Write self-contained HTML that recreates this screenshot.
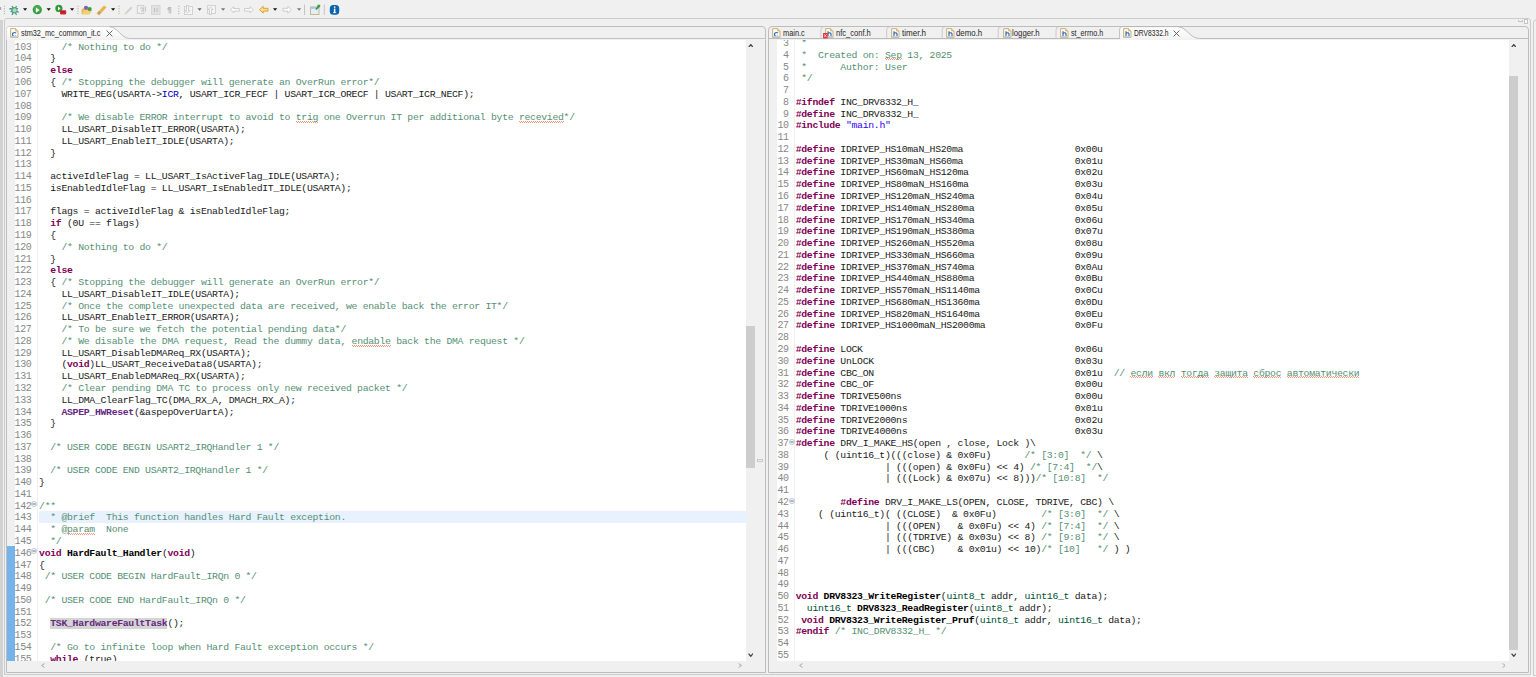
<!DOCTYPE html><html><head><meta charset="utf-8"><style>
*{margin:0;padding:0;box-sizing:border-box}
html,body{width:1536px;height:677px;overflow:hidden;background:#f0f0f0;position:relative;font-family:"Liberation Sans",sans-serif}
.abs{position:absolute}
.clip{position:absolute;overflow:hidden}
.ln{position:absolute;height:11.77px;line-height:11.77px;text-align:right;font-family:"Liberation Mono",monospace;font-size:10px;letter-spacing:-0.42px;color:#878787;white-space:pre}
.cl{position:absolute;height:11.77px;line-height:11.77px;font-family:"Liberation Mono",monospace;font-size:9.8px;letter-spacing:-0.3px;color:#202020;white-space:pre}
.curl{position:absolute;height:11.77px;background:#e8f2fe}
.k{color:#7F0055;font-weight:bold}
.c{color:#558f74}
.s{color:#2A00FF}
.f{color:#0000C0}
.d{font-weight:bold;color:#000}
.p{font-weight:bold;color:#642880}
.hl{font-weight:bold;color:#642880;background:#d4d4d4}
.t{color:#005032}
.u{background-image:linear-gradient(90deg,#f59a82 50%,transparent 50%),linear-gradient(90deg,transparent 50%,#f59a82 50%);background-size:2px 1px,2px 1px;background-position:0 8.6px,0 9.6px;background-repeat:repeat-x}
.fold{position:absolute}
.tab{position:absolute;font-size:8.6px;color:#1e1e1e;white-space:pre;line-height:10px;transform-origin:0 0}
</style></head><body>
<svg class="abs" style="left:0;top:0" width="345" height="18" viewBox="0 0 345 18"><rect x="0" y="7" width="1.2" height="3" fill="#a8a8a8"/><rect x="3.9" y="5.8" width="1" height="1" fill="#b0a595"/><rect x="3.9" y="8.2" width="1" height="1" fill="#b0a595"/><rect x="3.9" y="10.8" width="1" height="1" fill="#b0a595"/><rect x="3.9" y="13.1" width="1" height="1" fill="#b0a595"/><g stroke="#3a8f8a" stroke-width="1.1" fill="none"><path d="M10 8.5h8M10.5 11.5h7M12 6l1 2M16.5 6l-1 2M12 15l1-2M16.5 15l-1-2M9.5 8.5l1 1M18.5 12.5l-1-1"/></g><circle cx="14.3" cy="10.3" r="3.2" fill="#4aa3a0"/><circle cx="14.6" cy="10.3" r="2" fill="#b8dc98"/><path d="M23.0 8.2h4.2l-2.1 2.6z" fill="#111"/><circle cx="37.3" cy="9.7" r="4.6" fill="#2f9a3c"/><circle cx="37.3" cy="9.2" r="3.4" fill="#5cb85c" opacity="0.6"/><path d="M35.9 7.4v5.4l3.5-2.7z" fill="#fff"/><path d="M46.6 8.2h4.2l-2.1 2.6z" fill="#111"/><circle cx="58.9" cy="8.4" r="3.6" fill="#2f9a3c"/><path d="M58 6.6v3.8l2.5-1.9z" fill="#fff"/><rect x="60" y="10.2" width="6.2" height="4.2" rx="0.8" fill="#d9262b"/><rect x="61" y="11.5" width="4.2" height="0.8" fill="#8a1418"/><path d="M70.0 8.2h4.2l-2.1 2.6z" fill="#111"/><rect x="77.5" y="5.8" width="1" height="1" fill="#b0a595"/><rect x="77.5" y="8.2" width="1" height="1" fill="#b0a595"/><rect x="77.5" y="10.8" width="1" height="1" fill="#b0a595"/><rect x="77.5" y="13.1" width="1" height="1" fill="#b0a595"/><path d="M81.6 9.5l2-1.6 1 1h4.5l2.9 1.2-2.5 4.2h-7.9z" fill="#e8b84a"/><path d="M82 14.2l2.2-4.4h7.6l-2.4 4.4z" fill="#f3cf6f"/><circle cx="86" cy="7.8" r="2.1" fill="#7b5fbf"/><circle cx="89.6" cy="9" r="2.1" fill="#3d9a45"/><path d="M96.5 13.5l7.5-8 2.6 1.8-7.5 8.1z" fill="#e9b44c"/><path d="M99 11l2 1.6-1.7 1.8-2-1.6z" fill="#a9a49a"/><path d="M96.3 13.8l1.7 1.4 -1.5 0.3z" fill="#fff2a8"/><path d="M111.0 8.2h4.2l-2.1 2.6z" fill="#111"/><rect x="118.5" y="5.8" width="1" height="1" fill="#b0a595"/><rect x="118.5" y="8.2" width="1" height="1" fill="#b0a595"/><rect x="118.5" y="10.8" width="1" height="1" fill="#b0a595"/><rect x="118.5" y="13.1" width="1" height="1" fill="#b0a595"/><path d="M124 14l7-7.5 1.5 1.5-6.5 6.5z" fill="#d0d0cc"/><path d="M124.5 14.3l3-2 1 1z" fill="#e8e6c0"/><rect x="137.3" y="5.5" width="6.5" height="8" fill="none" stroke="#cfcfcf" stroke-width="1"/><path d="M140 8h3v3h-2" stroke="#c0c0c0" fill="none"/><path d="M145.5 6.5v5" stroke="#c8c8c8"/><rect x="151.5" y="5.5" width="8.5" height="9" fill="#e2e2e2" stroke="#d6d6d6"/><path d="M154.5 8v4M157 8v4" stroke="#bdbdbd"/><path d="M168 7.5h3.2M169.2 7.5v6M170.7 7.5v6" stroke="#bcbcbc" stroke-width="1"/><circle cx="168.5" cy="9" r="1.2" fill="#bcbcbc"/><rect x="178.3" y="5.8" width="1" height="1" fill="#b0a595"/><rect x="178.3" y="8.2" width="1" height="1" fill="#b0a595"/><rect x="178.3" y="10.8" width="1" height="1" fill="#b0a595"/><rect x="178.3" y="13.1" width="1" height="1" fill="#b0a595"/><rect x="184.5" y="6.5" width="8" height="8" fill="#f4f4f4" stroke="#d2d2d2"/><path d="M186.5 5.5v5l-1.5 0l2.5 2.5 2.5-2.5h-1.5v-5z" fill="#f8f8f8" stroke="#c4c4c4" stroke-width="0.8"/><path d="M197.5 8.2h4.2l-2.1 2.6z" fill="#666"/><rect x="207.5" y="5.5" width="8" height="8" fill="#f4f4f4" stroke="#d2d2d2"/><path d="M209.5 14.5v-5h-1.5l2.5-2.5 2.5 2.5h-1.5v5z" fill="#f8f8f8" stroke="#c4c4c4" stroke-width="0.8"/><path d="M221.0 8.2h4.2l-2.1 2.6z" fill="#777"/><path d="M230.5 9.7l3.3-3v1.8h5.5v2.6h-5.5v1.8z" fill="#fafafa" stroke="#c8c8c8" stroke-width="0.9"/><path d="M253.3 9.7l-3.3-3v1.8h-5.5v2.6h5.5v1.8z" fill="#fafafa" stroke="#c8c8c8" stroke-width="0.9"/><path d="M259.5 9.7l3.7-3.4v2h4.8v2.8h-4.8v2z" fill="#fce08a" stroke="#d9a13a" stroke-width="1"/><path d="M273.0 8.2h4.2l-2.1 2.6z" fill="#111"/><path d="M291.5 9.7l-3.7-3.4v2h-4.8v2.8h4.8v2z" fill="#fbfbfb" stroke="#c8c8c8" stroke-width="0.9"/><path d="M297.0 8.2h4.2l-2.1 2.6z" fill="#777"/><rect x="304" y="4.5" width="1" height="10.5" fill="#c4c4c4"/><rect x="310.5" y="7" width="8.5" height="7.5" fill="#dff0fb" stroke="#c9b07a" stroke-width="0.9"/><rect x="310.5" y="7" width="8.5" height="1.8" fill="#9cc8ea"/><path d="M316 9.5l2.5-3" stroke="#2e8b3a" stroke-width="1.3"/><circle cx="318.8" cy="6" r="1.6" fill="#3aa24a"/><rect x="323.8" y="4.5" width="1" height="10.5" fill="#c4c4c4"/><rect x="329.8" y="5" width="9.4" height="9.8" rx="3.5" fill="#0b63ad"/><rect x="333.9" y="8.6" width="1.5" height="4.3" fill="#fff"/><rect x="333.9" y="6.4" width="1.5" height="1.4" fill="#fff"/><rect x="333" y="12.3" width="3.2" height="0.8" fill="#fff"/></svg>
<div class="abs" style="left:0;top:20px;width:2.6px;height:657px;background:#d2d2d2"></div>
<div class="abs" style="left:3.5px;top:17.8px;width:1527px;height:657.1px;border:1px solid #cccccc;border-radius:3px 3px 0 0"></div>
<div class="abs" style="left:1518px;top:19.6px;width:4.5px;height:2px;border:1px solid #c4c4c4;border-top:none"></div>
<div class="abs" style="left:1524.2px;top:19.2px;width:4px;height:5px;border:1px solid #c4c4c4;border-top-width:1.5px;background:#fafafa"></div>
<div class="abs" style="left:1533.3px;top:18.8px;width:10px;height:657px;border:1px solid #cccccc;border-radius:4px 0 0 0"></div>
<div class="abs" style="left:6.0px;top:25.8px;width:759.7px;height:647.1px;border:1px solid #bdbdbd;border-radius:4px 4px 0 0;background:#f0f0f0"></div>
<svg class="abs" style="left:0;top:0" width="770" height="40" viewBox="0 0 770 40"><defs><linearGradient id="ag" x1="0" y1="0" x2="0" y2="1"><stop offset="0" stop-color="#ffffff"/><stop offset="1" stop-color="#f3f3f3"/></linearGradient></defs><path d="M6.5 38.6V30.3Q6.5 26.8 10 26.8H109.5C117.5 26.8 121.5 38.5 129.5 38.5H765V39.7H6.5z" fill="url(#ag)"/><path d="M109.5 26.8C117.5 26.8 121.5 38.5 129.5 38.5H765" fill="none" stroke="#b4b4b4" stroke-width="0.9"/><rect x="6.5" y="38.9" width="759" height="0.9" fill="#f0f0f0"/></svg>
<div class="abs" style="left:768.3px;top:25.8px;width:760.4px;height:647.1px;border:1px solid #bdbdbd;border-radius:4px 4px 0 0;background:#f0f0f0"></div>
<svg class="abs" style="left:0;top:0" width="1536" height="40" viewBox="0 0 1536 40"><defs><linearGradient id="ag2" x1="0" y1="0" x2="0" y2="1"><stop offset="0" stop-color="#ffffff"/><stop offset="1" stop-color="#f3f3f3"/></linearGradient></defs><path d="M769 38.5H1119.7V29.3Q1119.7 26.8 1122.3 26.8H1178.5" fill="none" stroke="#b4b4b4" stroke-width="0.9"/><path d="M1120.2 39.5V29.3Q1120.2 27.2 1122.3 27.2H1178.5C1186 27.2 1190 38.6 1199.6 38.6H1528V39.7H1120.2z" fill="url(#ag2)"/><path d="M1178.5 26.8C1186 26.8 1190 38.5 1199.6 38.5H1528" fill="none" stroke="#b4b4b4" stroke-width="0.9"/><path d="M820.9 38.4V30Q820.9 27 823.7 26.8" fill="none" stroke="#c6c6c6" stroke-width="0.9"/><path d="M886.7 38.4V30Q886.7 27 889.5 26.8" fill="none" stroke="#c6c6c6" stroke-width="0.9"/><path d="M942.2 38.4V30Q942.2 27 945.0 26.8" fill="none" stroke="#c6c6c6" stroke-width="0.9"/><path d="M998.2 38.4V30Q998.2 27 1001.0 26.8" fill="none" stroke="#c6c6c6" stroke-width="0.9"/><path d="M1056.0 38.4V30Q1056.0 27 1058.8 26.8" fill="none" stroke="#c6c6c6" stroke-width="0.9"/></svg>
<svg class="abs" style="left:9.5px;top:27.8px" width="9" height="10" viewBox="0 0 9 10"><path d="M0.6 0.6h5l2.4 2.4v6.4h-7.4z" fill="#f6f9fd" stroke="#c8aa64" stroke-width="0.9"/><path d="M5.6 0.6v2.4h2.4" fill="#f0d58c" stroke="#c8aa64" stroke-width="0.7"/><path d="M6 5.2a2 2 0 1 0 0 2.6" fill="none" stroke="#3b6cb0" stroke-width="1.2"/><rect x="1" y="8" width="7" height="1.2" fill="#b8d4f0"/></svg>
<div class="tab" style="left:20.60px;top:28.20px;transform:scaleX(0.852)">stm32_mc_common_it.c</div>
<svg class="abs" style="left:105.6px;top:29.8px" width="7" height="7" viewBox="0 0 7 7"><path d="M0.6 0.6l5.8 5.8M6.4 0.6l-5.8 5.8" stroke="#555" stroke-width="0.9"/></svg>
<svg class="abs" style="left:771.5px;top:27.8px" width="9" height="10" viewBox="0 0 9 10"><path d="M0.6 0.6h5l2.4 2.4v6.4h-7.4z" fill="#f6f9fd" stroke="#c8aa64" stroke-width="0.9"/><path d="M5.6 0.6v2.4h2.4" fill="#f0d58c" stroke="#c8aa64" stroke-width="0.7"/><path d="M6 5.2a2 2 0 1 0 0 2.6" fill="none" stroke="#3b6cb0" stroke-width="1.2"/><rect x="1" y="8" width="7" height="1.2" fill="#b8d4f0"/></svg>
<div class="tab" style="left:783.20px;top:28.20px;transform:scaleX(0.861)">main.c</div>
<svg class="abs" style="left:825.3px;top:27.8px" width="9" height="10" viewBox="0 0 9 10"><path d="M0.6 0.6h5l2.4 2.4v6.4h-7.4z" fill="#f6f9fd" stroke="#c8aa64" stroke-width="0.9"/><path d="M5.6 0.6v2.4h2.4" fill="#f0d58c" stroke="#c8aa64" stroke-width="0.7"/><path d="M3 3.2v5M3 5.8q0.6-1 1.6-1t1.4 1v2.4" fill="none" stroke="#355f9c" stroke-width="1.1"/><rect x="1" y="8" width="7" height="1.2" fill="#b8d4f0"/></svg><svg class="abs" style="left:823.3px;top:32.6px" width="5" height="6" viewBox="0 0 5 6"><rect x="0" y="0" width="4.6" height="5.4" fill="#e0303a"/><path d="M1 1.2l2.6 3M3.6 1.2l-2.6 3" stroke="#fff" stroke-width="0.7"/></svg>
<div class="tab" style="left:836.20px;top:28.20px;transform:scaleX(0.877)">nfc_conf.h</div>
<svg class="abs" style="left:890.5px;top:27.8px" width="9" height="10" viewBox="0 0 9 10"><path d="M0.6 0.6h5l2.4 2.4v6.4h-7.4z" fill="#f6f9fd" stroke="#c8aa64" stroke-width="0.9"/><path d="M5.6 0.6v2.4h2.4" fill="#f0d58c" stroke="#c8aa64" stroke-width="0.7"/><path d="M3 3.2v5M3 5.8q0.6-1 1.6-1t1.4 1v2.4" fill="none" stroke="#355f9c" stroke-width="1.1"/><rect x="1" y="8" width="7" height="1.2" fill="#b8d4f0"/></svg>
<div class="tab" style="left:901.50px;top:28.20px;transform:scaleX(0.934)">timer.h</div>
<svg class="abs" style="left:946.0px;top:27.8px" width="9" height="10" viewBox="0 0 9 10"><path d="M0.6 0.6h5l2.4 2.4v6.4h-7.4z" fill="#f6f9fd" stroke="#c8aa64" stroke-width="0.9"/><path d="M5.6 0.6v2.4h2.4" fill="#f0d58c" stroke="#c8aa64" stroke-width="0.7"/><path d="M3 3.2v5M3 5.8q0.6-1 1.6-1t1.4 1v2.4" fill="none" stroke="#355f9c" stroke-width="1.1"/><rect x="1" y="8" width="7" height="1.2" fill="#b8d4f0"/></svg>
<div class="tab" style="left:955.80px;top:28.20px;transform:scaleX(0.913)">demo.h</div>
<svg class="abs" style="left:1002.5px;top:27.8px" width="9" height="10" viewBox="0 0 9 10"><path d="M0.6 0.6h5l2.4 2.4v6.4h-7.4z" fill="#f6f9fd" stroke="#c8aa64" stroke-width="0.9"/><path d="M5.6 0.6v2.4h2.4" fill="#f0d58c" stroke="#c8aa64" stroke-width="0.7"/><path d="M3 3.2v5M3 5.8q0.6-1 1.6-1t1.4 1v2.4" fill="none" stroke="#355f9c" stroke-width="1.1"/><rect x="1" y="8" width="7" height="1.2" fill="#b8d4f0"/></svg>
<div class="tab" style="left:1012.30px;top:28.20px;transform:scaleX(0.905)">logger.h</div>
<svg class="abs" style="left:1059.5px;top:27.8px" width="9" height="10" viewBox="0 0 9 10"><path d="M0.6 0.6h5l2.4 2.4v6.4h-7.4z" fill="#f6f9fd" stroke="#c8aa64" stroke-width="0.9"/><path d="M5.6 0.6v2.4h2.4" fill="#f0d58c" stroke="#c8aa64" stroke-width="0.7"/><path d="M3 3.2v5M3 5.8q0.6-1 1.6-1t1.4 1v2.4" fill="none" stroke="#355f9c" stroke-width="1.1"/><rect x="1" y="8" width="7" height="1.2" fill="#b8d4f0"/></svg>
<div class="tab" style="left:1070.80px;top:28.20px;transform:scaleX(0.834)">st_errno.h</div>
<svg class="abs" style="left:1123.2px;top:27.8px" width="9" height="10" viewBox="0 0 9 10"><path d="M0.6 0.6h5l2.4 2.4v6.4h-7.4z" fill="#f6f9fd" stroke="#c8aa64" stroke-width="0.9"/><path d="M5.6 0.6v2.4h2.4" fill="#f0d58c" stroke="#c8aa64" stroke-width="0.7"/><path d="M3 3.2v5M3 5.8q0.6-1 1.6-1t1.4 1v2.4" fill="none" stroke="#355f9c" stroke-width="1.1"/><rect x="1" y="8" width="7" height="1.2" fill="#b8d4f0"/></svg>
<div class="tab" style="left:1134.20px;top:28.20px;transform:scaleX(0.779)">DRV8332.h</div>
<svg class="abs" style="left:1172.6px;top:29.8px" width="7" height="7" viewBox="0 0 7 7"><path d="M0.6 0.6l5.8 5.8M6.4 0.6l-5.8 5.8" stroke="#555" stroke-width="0.9"/></svg>
<div class="abs" style="left:6.6px;top:39.7px;width:739.5px;height:621.1px;background:#fff"></div>
<div class="abs" style="left:6.6px;top:39.7px;width:8.1px;height:621.1px;background:#f0f0f0"></div>
<div class="abs" style="left:37.2px;top:39.7px;width:0.8px;height:621.1px;background:#f0f0f0"></div>
<div class="abs" style="left:746.2px;top:325.8px;width:9px;height:142.2px;background:#cdcdcd"></div>
<div class="abs" style="left:757px;top:459px;width:5.5px;height:3px;border:0.8px solid #c8c8c8"></div>
<svg class="abs" style="left:747.9px;top:43.6px" width="5.6" height="3.6" viewBox="0 0 5.6 3.6"><path d="M0.6 3.3L2.80.6L5.0 3.3" fill="none" stroke="#444" stroke-width="1.3"/></svg>
<svg class="abs" style="left:747.9px;top:653.0px" width="5.6" height="3.6" viewBox="0 0 5.6 3.6"><path d="M0.6 0.6L2.8 3.3L5.00.6" fill="none" stroke="#444" stroke-width="1.3"/></svg>
<svg class="abs" style="left:41.2px;top:663.0px" width="3.8" height="5.0" viewBox="0 0 3.8 5.0"><path d="M3.50.6L0.6 2.5L3.5 4.4" fill="none" stroke="#a8a8a8" stroke-width="1.0"/></svg>
<svg class="abs" style="left:738.4px;top:663.0px" width="3.8" height="5.0" viewBox="0 0 3.8 5.0"><path d="M0.6 0.6L3.5 2.5L0.6 4.4" fill="none" stroke="#a8a8a8" stroke-width="1.0"/></svg>
<div class="abs" style="left:768.9px;top:39.7px;width:740.3px;height:621.1px;background:#fff"></div>
<div class="abs" style="left:768.9px;top:39.7px;width:8.6px;height:621.1px;background:#f0f0f0"></div>
<div class="abs" style="left:794.2px;top:39.7px;width:0.8px;height:621.1px;background:#f0f0f0"></div>
<div class="abs" style="left:1509.2px;top:75.9px;width:9px;height:573.9px;background:#cdcdcd"></div>
<svg class="abs" style="left:1510.9px;top:43.6px" width="5.6" height="3.6" viewBox="0 0 5.6 3.6"><path d="M0.6 3.3L2.80.6L5.0 3.3" fill="none" stroke="#444" stroke-width="1.3"/></svg>
<svg class="abs" style="left:1510.9px;top:653.0px" width="5.6" height="3.6" viewBox="0 0 5.6 3.6"><path d="M0.6 0.6L2.8 3.3L5.00.6" fill="none" stroke="#444" stroke-width="1.3"/></svg>
<svg class="abs" style="left:798.8px;top:663.0px" width="3.8" height="5.0" viewBox="0 0 3.8 5.0"><path d="M3.50.6L0.6 2.5L3.5 4.4" fill="none" stroke="#a8a8a8" stroke-width="1.0"/></svg>
<svg class="abs" style="left:1501.6px;top:663.0px" width="3.8" height="5.0" viewBox="0 0 3.8 5.0"><path d="M0.6 0.6L3.5 2.5L0.6 4.4" fill="none" stroke="#a8a8a8" stroke-width="1.0"/></svg>
<div class="clip" style="left:7.00px;top:39.70px;width:739.00px;height:621.10px">
<div class="abs" style="left:0.2px;top:506.71px;width:7.7px;height:200px;background:#74b4eb"></div>
<div class="ln" style="top:2.00px;right:714.70px">103</div>
<div class="cl" style="top:2.00px;left:32.10px">    <span class="c">/* Nothing to do */</span></div>
<div class="ln" style="top:13.77px;right:714.70px">104</div>
<div class="cl" style="top:13.77px;left:32.10px">  }</div>
<div class="ln" style="top:25.54px;right:714.70px">105</div>
<div class="cl" style="top:25.54px;left:32.10px">  <span class="k">else</span></div>
<div class="ln" style="top:37.31px;right:714.70px">106</div>
<div class="cl" style="top:37.31px;left:32.10px">  { <span class="c">/* Stopping the debugger will generate an OverRun error*/</span></div>
<div class="ln" style="top:49.08px;right:714.70px">107</div>
<div class="cl" style="top:49.08px;left:32.10px">    WRITE_REG(USARTA-&gt;<span class="f">ICR</span>, USART_ICR_FECF | USART_ICR_ORECF | USART_ICR_NECF);</div>
<div class="ln" style="top:60.85px;right:714.70px">108</div>
<div class="ln" style="top:72.62px;right:714.70px">109</div>
<div class="cl" style="top:72.62px;left:32.10px">    <span class="c">/* We disable ERROR interrupt to avoid to <span class="u">trig</span> one Overrun IT per additional byte <span class="u">recevied</span>*/</span></div>
<div class="ln" style="top:84.39px;right:714.70px">110</div>
<div class="cl" style="top:84.39px;left:32.10px">    LL_USART_DisableIT_ERROR(USARTA);</div>
<div class="ln" style="top:96.16px;right:714.70px">111</div>
<div class="cl" style="top:96.16px;left:32.10px">    LL_USART_EnableIT_IDLE(USARTA);</div>
<div class="ln" style="top:107.93px;right:714.70px">112</div>
<div class="cl" style="top:107.93px;left:32.10px">  }</div>
<div class="ln" style="top:119.70px;right:714.70px">113</div>
<div class="ln" style="top:131.47px;right:714.70px">114</div>
<div class="cl" style="top:131.47px;left:32.10px">  activeIdleFlag = LL_USART_IsActiveFlag_IDLE(USARTA);</div>
<div class="ln" style="top:143.24px;right:714.70px">115</div>
<div class="cl" style="top:143.24px;left:32.10px">  isEnabledIdleFlag = LL_USART_IsEnabledIT_IDLE(USARTA);</div>
<div class="ln" style="top:155.01px;right:714.70px">116</div>
<div class="ln" style="top:166.78px;right:714.70px">117</div>
<div class="cl" style="top:166.78px;left:32.10px">  flags = activeIdleFlag &amp; isEnabledIdleFlag;</div>
<div class="ln" style="top:178.55px;right:714.70px">118</div>
<div class="cl" style="top:178.55px;left:32.10px">  <span class="k">if</span> (0U == flags)</div>
<div class="ln" style="top:190.32px;right:714.70px">119</div>
<div class="cl" style="top:190.32px;left:32.10px">  {</div>
<div class="ln" style="top:202.09px;right:714.70px">120</div>
<div class="cl" style="top:202.09px;left:32.10px">    <span class="c">/* Nothing to do */</span></div>
<div class="ln" style="top:213.86px;right:714.70px">121</div>
<div class="cl" style="top:213.86px;left:32.10px">  }</div>
<div class="ln" style="top:225.63px;right:714.70px">122</div>
<div class="cl" style="top:225.63px;left:32.10px">  <span class="k">else</span></div>
<div class="ln" style="top:237.40px;right:714.70px">123</div>
<div class="cl" style="top:237.40px;left:32.10px">  { <span class="c">/* Stopping the debugger will generate an OverRun error*/</span></div>
<div class="ln" style="top:249.17px;right:714.70px">124</div>
<div class="cl" style="top:249.17px;left:32.10px">    LL_USART_DisableIT_IDLE(USARTA);</div>
<div class="ln" style="top:260.94px;right:714.70px">125</div>
<div class="cl" style="top:260.94px;left:32.10px">    <span class="c">/* Once the complete unexpected data are received, we enable back the error IT*/</span></div>
<div class="ln" style="top:272.71px;right:714.70px">126</div>
<div class="cl" style="top:272.71px;left:32.10px">    LL_USART_EnableIT_ERROR(USARTA);</div>
<div class="ln" style="top:284.48px;right:714.70px">127</div>
<div class="cl" style="top:284.48px;left:32.10px">    <span class="c">/* To be sure we fetch the potential pending data*/</span></div>
<div class="ln" style="top:296.25px;right:714.70px">128</div>
<div class="cl" style="top:296.25px;left:32.10px">    <span class="c">/* We disable the DMA request, Read the dummy data, <span class="u">endable</span> back the DMA request */</span></div>
<div class="ln" style="top:308.02px;right:714.70px">129</div>
<div class="cl" style="top:308.02px;left:32.10px">    LL_USART_DisableDMAReq_RX(USARTA);</div>
<div class="ln" style="top:319.79px;right:714.70px">130</div>
<div class="cl" style="top:319.79px;left:32.10px">    (<span class="k">void</span>)LL_USART_ReceiveData8(USARTA);</div>
<div class="ln" style="top:331.56px;right:714.70px">131</div>
<div class="cl" style="top:331.56px;left:32.10px">    LL_USART_EnableDMAReq_RX(USARTA);</div>
<div class="ln" style="top:343.33px;right:714.70px">132</div>
<div class="cl" style="top:343.33px;left:32.10px">    <span class="c">/* Clear pending DMA TC to process only new received packet */</span></div>
<div class="ln" style="top:355.10px;right:714.70px">133</div>
<div class="cl" style="top:355.10px;left:32.10px">    LL_DMA_ClearFlag_TC(DMA_RX_A, DMACH_RX_A);</div>
<div class="ln" style="top:366.87px;right:714.70px">134</div>
<div class="cl" style="top:366.87px;left:32.10px">    <span class="p">ASPEP_HWReset</span>(&amp;aspepOverUartA);</div>
<div class="ln" style="top:378.64px;right:714.70px">135</div>
<div class="cl" style="top:378.64px;left:32.10px">  }</div>
<div class="ln" style="top:390.41px;right:714.70px">136</div>
<div class="ln" style="top:402.18px;right:714.70px">137</div>
<div class="cl" style="top:402.18px;left:32.10px">  <span class="c">/* USER CODE BEGIN USART2_IRQHandler 1 */</span></div>
<div class="ln" style="top:413.95px;right:714.70px">138</div>
<div class="ln" style="top:425.72px;right:714.70px">139</div>
<div class="cl" style="top:425.72px;left:32.10px">  <span class="c">/* USER CODE END USART2_IRQHandler 1 */</span></div>
<div class="ln" style="top:437.49px;right:714.70px">140</div>
<div class="cl" style="top:437.49px;left:32.10px">}</div>
<div class="ln" style="top:449.26px;right:714.70px">141</div>
<div class="ln" style="top:461.03px;right:714.70px">142</div>
<svg class="fold" style="top:461.63px;left:24.40px" width="6" height="6" viewBox="0 0 6 6"><circle cx="3" cy="3" r="2.6" fill="#f4f7fb" stroke="#b8c0cc" stroke-width="0.8"/><path d="M1.4 3h3.2" stroke="#6f7c8e" stroke-width="1.1"/></svg>
<div class="cl" style="top:461.03px;left:32.10px"><span class="c">/**</span></div>
<div class="curl" style="top:471.35px;left:32.00px;width:707.00px"></div>
<div class="ln" style="top:472.80px;right:714.70px">143</div>
<div class="cl" style="top:472.80px;left:32.10px">  <span class="c">* @brief  This function handles Hard Fault exception.</span></div>
<div class="ln" style="top:484.57px;right:714.70px">144</div>
<div class="cl" style="top:484.57px;left:32.10px">  <span class="c">* @<span class="u">param</span>  None</span></div>
<div class="ln" style="top:496.34px;right:714.70px">145</div>
<div class="cl" style="top:496.34px;left:32.10px">  <span class="c">*/</span></div>
<div class="ln" style="top:508.11px;right:714.70px">146</div>
<svg class="fold" style="top:508.71px;left:24.40px" width="6" height="6" viewBox="0 0 6 6"><circle cx="3" cy="3" r="2.6" fill="#f4f7fb" stroke="#b8c0cc" stroke-width="0.8"/><path d="M1.4 3h3.2" stroke="#6f7c8e" stroke-width="1.1"/></svg>
<div class="cl" style="top:508.11px;left:32.10px"><span class="k">void</span> <span class="d">HardFault_Handler</span>(<span class="k">void</span>)</div>
<div class="ln" style="top:519.88px;right:714.70px">147</div>
<div class="cl" style="top:519.88px;left:32.10px">{</div>
<div class="ln" style="top:531.65px;right:714.70px">148</div>
<div class="cl" style="top:531.65px;left:32.10px"> <span class="c">/* USER CODE BEGIN HardFault_IRQn 0 */</span></div>
<div class="ln" style="top:543.42px;right:714.70px">149</div>
<div class="ln" style="top:555.19px;right:714.70px">150</div>
<div class="cl" style="top:555.19px;left:32.10px"> <span class="c">/* USER CODE END HardFault_IRQn 0 */</span></div>
<div class="ln" style="top:566.96px;right:714.70px">151</div>
<div class="ln" style="top:578.73px;right:714.70px">152</div>
<div class="cl" style="top:578.73px;left:32.10px">  <span class="hl">TSK_HardwareFaultTask</span>();</div>
<div class="ln" style="top:590.50px;right:714.70px">153</div>
<div class="ln" style="top:602.27px;right:714.70px">154</div>
<div class="cl" style="top:602.27px;left:32.10px">  <span class="c">/* Go to infinite loop when Hard Fault exception occurs */</span></div>
<div class="ln" style="top:614.04px;right:714.70px">155</div>
<div class="cl" style="top:614.04px;left:32.10px">  <span class="k">while</span> (true)</div>
<div class="ln" style="top:625.81px;right:714.70px">156</div>
<div class="cl" style="top:625.81px;left:32.10px">  {</div>
</div>
<div class="clip" style="left:769.00px;top:39.70px;width:740.00px;height:621.10px">

<div class="ln" style="top:-1.70px;right:720.40px">3</div>
<div class="cl" style="top:-1.70px;left:26.70px"> <span class="c">*</span></div>
<div class="ln" style="top:10.07px;right:720.40px">4</div>
<div class="cl" style="top:10.07px;left:26.70px"> <span class="c">*  Created on: <span class="u">Sep</span> 13, 2025</span></div>
<div class="ln" style="top:21.84px;right:720.40px">5</div>
<div class="cl" style="top:21.84px;left:26.70px"> <span class="c">*      Author: User</span></div>
<div class="ln" style="top:33.61px;right:720.40px">6</div>
<div class="cl" style="top:33.61px;left:26.70px"> <span class="c">*/</span></div>
<div class="ln" style="top:45.38px;right:720.40px">7</div>
<div class="ln" style="top:57.15px;right:720.40px">8</div>
<div class="cl" style="top:57.15px;left:26.70px"><span class="k">#ifndef</span> INC_DRV8332_H_</div>
<div class="ln" style="top:68.92px;right:720.40px">9</div>
<div class="cl" style="top:68.92px;left:26.70px"><span class="k">#define</span> INC_DRV8332_H_</div>
<div class="ln" style="top:80.69px;right:720.40px">10</div>
<div class="cl" style="top:80.69px;left:26.70px"><span class="k">#include</span> <span class="s">"main.h"</span></div>
<div class="ln" style="top:92.46px;right:720.40px">11</div>
<div class="ln" style="top:104.23px;right:720.40px">12</div>
<div class="cl" style="top:104.23px;left:26.70px"><span class="k">#define</span> IDRIVEP_HS10maN_HS20ma                    0x00u</div>
<div class="ln" style="top:116.00px;right:720.40px">13</div>
<div class="cl" style="top:116.00px;left:26.70px"><span class="k">#define</span> IDRIVEP_HS30maN_HS60ma                    0x01u</div>
<div class="ln" style="top:127.77px;right:720.40px">14</div>
<div class="cl" style="top:127.77px;left:26.70px"><span class="k">#define</span> IDRIVEP_HS60maN_HS120ma                   0x02u</div>
<div class="ln" style="top:139.54px;right:720.40px">15</div>
<div class="cl" style="top:139.54px;left:26.70px"><span class="k">#define</span> IDRIVEP_HS80maN_HS160ma                   0x03u</div>
<div class="ln" style="top:151.31px;right:720.40px">16</div>
<div class="cl" style="top:151.31px;left:26.70px"><span class="k">#define</span> IDRIVEP_HS120maN_HS240ma                  0x04u</div>
<div class="ln" style="top:163.08px;right:720.40px">17</div>
<div class="cl" style="top:163.08px;left:26.70px"><span class="k">#define</span> IDRIVEP_HS140maN_HS280ma                  0x05u</div>
<div class="ln" style="top:174.85px;right:720.40px">18</div>
<div class="cl" style="top:174.85px;left:26.70px"><span class="k">#define</span> IDRIVEP_HS170maN_HS340ma                  0x06u</div>
<div class="ln" style="top:186.62px;right:720.40px">19</div>
<div class="cl" style="top:186.62px;left:26.70px"><span class="k">#define</span> IDRIVEP_HS190maN_HS380ma                  0x07u</div>
<div class="ln" style="top:198.39px;right:720.40px">20</div>
<div class="cl" style="top:198.39px;left:26.70px"><span class="k">#define</span> IDRIVEP_HS260maN_HS520ma                  0x08u</div>
<div class="ln" style="top:210.16px;right:720.40px">21</div>
<div class="cl" style="top:210.16px;left:26.70px"><span class="k">#define</span> IDRIVEP_HS330maN_HS660ma                  0x09u</div>
<div class="ln" style="top:221.93px;right:720.40px">22</div>
<div class="cl" style="top:221.93px;left:26.70px"><span class="k">#define</span> IDRIVEP_HS370maN_HS740ma                  0x0Au</div>
<div class="ln" style="top:233.70px;right:720.40px">23</div>
<div class="cl" style="top:233.70px;left:26.70px"><span class="k">#define</span> IDRIVEP_HS440maN_HS880ma                  0x0Bu</div>
<div class="ln" style="top:245.47px;right:720.40px">24</div>
<div class="cl" style="top:245.47px;left:26.70px"><span class="k">#define</span> IDRIVEP_HS570maN_HS1140ma                 0x0Cu</div>
<div class="ln" style="top:257.24px;right:720.40px">25</div>
<div class="cl" style="top:257.24px;left:26.70px"><span class="k">#define</span> IDRIVEP_HS680maN_HS1360ma                 0x0Du</div>
<div class="ln" style="top:269.01px;right:720.40px">26</div>
<div class="cl" style="top:269.01px;left:26.70px"><span class="k">#define</span> IDRIVEP_HS820maN_HS1640ma                 0x0Eu</div>
<div class="ln" style="top:280.78px;right:720.40px">27</div>
<div class="cl" style="top:280.78px;left:26.70px"><span class="k">#define</span> IDRIVEP_HS1000maN_HS2000ma                0x0Fu</div>
<div class="ln" style="top:292.55px;right:720.40px">28</div>
<div class="ln" style="top:304.32px;right:720.40px">29</div>
<div class="cl" style="top:304.32px;left:26.70px"><span class="k">#define</span> LOCK                                      0x06u</div>
<div class="ln" style="top:316.09px;right:720.40px">30</div>
<div class="cl" style="top:316.09px;left:26.70px"><span class="k">#define</span> UnLOCK                                    0x03u</div>
<div class="ln" style="top:327.86px;right:720.40px">31</div>
<div class="cl" style="top:327.86px;left:26.70px"><span class="k">#define</span> CBC_ON                                    0x01u  <span class="c">// <span class="u">если</span> <span class="u">вкл</span> <span class="u">тогда</span> <span class="u">защита</span> <span class="u">сброс</span> <span class="u">автоматически</span></span></div>
<div class="ln" style="top:339.63px;right:720.40px">32</div>
<div class="cl" style="top:339.63px;left:26.70px"><span class="k">#define</span> CBC_OF                                    0x00u</div>
<div class="ln" style="top:351.40px;right:720.40px">33</div>
<div class="cl" style="top:351.40px;left:26.70px"><span class="k">#define</span> TDRIVE500ns                               0x00u</div>
<div class="ln" style="top:363.17px;right:720.40px">34</div>
<div class="cl" style="top:363.17px;left:26.70px"><span class="k">#define</span> TDRIVE1000ns                              0x01u</div>
<div class="ln" style="top:374.94px;right:720.40px">35</div>
<div class="cl" style="top:374.94px;left:26.70px"><span class="k">#define</span> TDRIVE2000ns                              0x02u</div>
<div class="ln" style="top:386.71px;right:720.40px">36</div>
<div class="cl" style="top:386.71px;left:26.70px"><span class="k">#define</span> TDRIVE4000ns                              0x03u</div>
<div class="ln" style="top:398.48px;right:720.40px">37</div>
<svg class="fold" style="top:399.08px;left:19.70px" width="6" height="6" viewBox="0 0 6 6"><circle cx="3" cy="3" r="2.6" fill="#f4f7fb" stroke="#b8c0cc" stroke-width="0.8"/><path d="M1.4 3h3.2" stroke="#6f7c8e" stroke-width="1.1"/></svg>
<div class="cl" style="top:398.48px;left:26.70px"><span class="k">#define</span> DRV_I_MAKE_HS(open , close, Lock )\</div>
<div class="ln" style="top:410.25px;right:720.40px">38</div>
<div class="cl" style="top:410.25px;left:26.70px">     ( (uint16_t)(((close) &amp; 0x0Fu)      <span class="c">/* [3:0]  */</span> \</div>
<div class="ln" style="top:422.02px;right:720.40px">39</div>
<div class="cl" style="top:422.02px;left:26.70px">                | (((open) &amp; 0x0Fu) &lt;&lt; 4) <span class="c">/* [7:4]  */</span>\</div>
<div class="ln" style="top:433.79px;right:720.40px">40</div>
<div class="cl" style="top:433.79px;left:26.70px">                | (((Lock) &amp; 0x07u) &lt;&lt; 8)))<span class="c">/* [10:8]  */</span></div>
<div class="ln" style="top:445.56px;right:720.40px">41</div>
<div class="ln" style="top:457.33px;right:720.40px">42</div>
<svg class="fold" style="top:457.93px;left:19.70px" width="6" height="6" viewBox="0 0 6 6"><circle cx="3" cy="3" r="2.6" fill="#f4f7fb" stroke="#b8c0cc" stroke-width="0.8"/><path d="M1.4 3h3.2" stroke="#6f7c8e" stroke-width="1.1"/></svg>
<div class="cl" style="top:457.33px;left:26.70px">        <span class="k">#define</span> DRV_I_MAKE_LS(OPEN, CLOSE, TDRIVE, CBC) \</div>
<div class="ln" style="top:469.10px;right:720.40px">43</div>
<div class="cl" style="top:469.10px;left:26.70px">    ( (uint16_t)( ((CLOSE)  &amp; 0x0Fu)        <span class="c">/* [3:0]  */</span> \</div>
<div class="ln" style="top:480.87px;right:720.40px">44</div>
<div class="cl" style="top:480.87px;left:26.70px">                | (((OPEN)   &amp; 0x0Fu) &lt;&lt; 4) <span class="c">/* [7:4]  */</span> \</div>
<div class="ln" style="top:492.64px;right:720.40px">45</div>
<div class="cl" style="top:492.64px;left:26.70px">                | (((TDRIVE) &amp; 0x03u) &lt;&lt; 8) <span class="c">/* [9:8]  */</span> \</div>
<div class="ln" style="top:504.41px;right:720.40px">46</div>
<div class="cl" style="top:504.41px;left:26.70px">                | (((CBC)    &amp; 0x01u) &lt;&lt; 10)<span class="c">/* [10]   */</span> ) )</div>
<div class="ln" style="top:516.18px;right:720.40px">47</div>
<div class="ln" style="top:527.95px;right:720.40px">48</div>
<div class="ln" style="top:539.72px;right:720.40px">49</div>
<div class="ln" style="top:551.49px;right:720.40px">50</div>
<div class="cl" style="top:551.49px;left:26.70px"><span class="k">void</span> <span class="d">DRV8323_WriteRegister</span>(<span class="t">uint8_t</span> addr, <span class="t">uint16_t</span> data);</div>
<div class="ln" style="top:563.26px;right:720.40px">51</div>
<div class="cl" style="top:563.26px;left:26.70px">  <span class="t">uint16_t</span> <span class="d">DRV8323_ReadRegister</span>(<span class="t">uint8_t</span> addr);</div>
<div class="ln" style="top:575.03px;right:720.40px">52</div>
<div class="cl" style="top:575.03px;left:26.70px"> <span class="k">void</span> <span class="d">DRV8323_WriteRegister_Pruf</span>(<span class="t">uint8_t</span> addr, <span class="t">uint16_t</span> data);</div>
<div class="ln" style="top:586.80px;right:720.40px">53</div>
<div class="cl" style="top:586.80px;left:26.70px"><span class="k">#endif</span> <span class="c">/* INC_DRV8332_H_ */</span></div>
<div class="ln" style="top:598.57px;right:720.40px">54</div>
<div class="ln" style="top:610.34px;right:720.40px">55</div>
<div class="ln" style="top:622.11px;right:720.40px">56</div>
</div>
</body></html>
